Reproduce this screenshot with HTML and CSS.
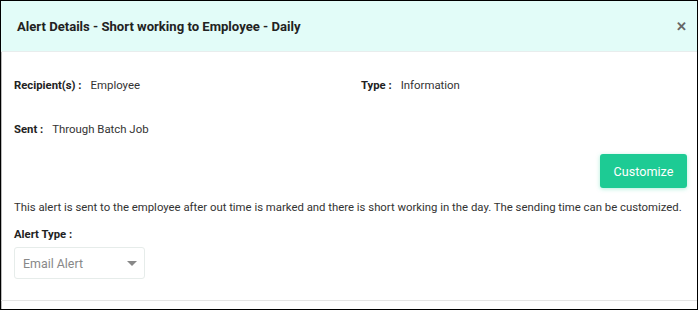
FILE: index.html
```html
<!DOCTYPE html>
<html>
<head>
<meta charset="utf-8">
<link rel="stylesheet" href="styles.css">
</head>
<body>
<div class="modal">
  <div class="modal-header">
    <h4 class="modal-title">Alert Details - Short working to Employee - Daily</h4>
    <span class="close">&#x2715;</span>
  </div>
  <div class="modal-body">
    <div class="row">
      <div class="col"><span class="lbl">Recipient(s) :</span><span class="val">Employee</span></div>
      <div class="col"><span class="lbl">Type :</span><span class="val">Information</span></div>
    </div>
    <div class="row row-sent">
      <div class="col"><span class="lbl">Sent :</span><span class="val">Through Batch Job</span></div>
    </div>
    <div class="actions">
      <button class="btn">Customize</button>
    </div>
    <p class="desc">This alert is sent to the employee after out time is marked and there is short working in the day. The sending time can be customized.</p>
    <div class="lbl block">Alert Type :</div>
    <div class="select">
      <span>Email Alert</span>
      <span class="caret"></span>
    </div>
  </div>
  <div class="modal-footer"></div>
</div>
</body>
</html>
```
FILE: styles.css
```css
html, body {
  margin: 0;
  padding: 0;
  background: #fff;
}
body {
  font-family: Roboto, "Liberation Sans", sans-serif;
  color: #333;
  width: 700px;
  height: 310px;
  overflow: hidden;
}
.modal {
  box-sizing: border-box;
  width: 698px;
  height: 310px;
  border: 1px solid #000;
  display: flex;
  flex-direction: column;
  box-shadow: inset 1px 0 0 #bbb;
}
.modal-header {
  height: 50px;
  background: #e2fcf8;
  border-bottom: 1px solid #e8eded;
  display: flex;
  align-items: center;
  justify-content: space-between;
  padding: 0 10px 0 16px;
  flex: none;
}
.modal-title {
  margin: 0;
  font-size: 13.1px;
  font-weight: 700;
  color: #222;
}
.close {
  font-size: 13px;
  font-weight: 700;
  color: #666;
}
.modal-body {
  flex: 1;
  padding: 0 10px 0 13px;
}
.row {
  display: flex;
  margin-top: 25px;
  font-size: 11.4px;
  line-height: 16px;
}
.row-sent {
  margin-top: 27px;
}
.col {
  flex: 0 0 347px;
}
.lbl {
  font-weight: 700;
  color: #222;
  font-size: 11.3px;
}
.val {
  margin-left: 9px;
  color: #333;
}
.actions {
  display: flex;
  justify-content: flex-end;
  margin-top: 16px;
}
.btn {
  width: 87px;
  height: 34px;
  border: none;
  border-radius: 3px;
  background: #1dcb94;
  color: #fff;
  font-family: Roboto, "Liberation Sans", sans-serif;
  font-size: 12.6px;
  box-shadow: 0 1px 4px rgba(28, 205, 151, 0.35);
}
.desc {
  margin: 10px 0 0 0;
  font-size: 11.35px;
  line-height: 18px;
  color: #333;
  white-space: nowrap;
}
.block {
  margin-top: 11px;
  line-height: 16px;
}
.select {
  box-sizing: border-box;
  margin-top: 4px;
  width: 131px;
  height: 32px;
  border: 1px solid #e6ecea;
  border-radius: 3px;
  display: flex;
  align-items: center;
  justify-content: space-between;
  padding: 0 7px 0 8px;
  font-size: 12.4px;
  color: #888;
}
.caret {
  width: 0;
  height: 0;
  border-left: 5px solid transparent;
  border-right: 5px solid transparent;
  border-top: 5px solid #888;
}
.modal-footer {
  height: 8px;
  border-top: 1px solid #e5e5e5;
  flex: none;
}
```
